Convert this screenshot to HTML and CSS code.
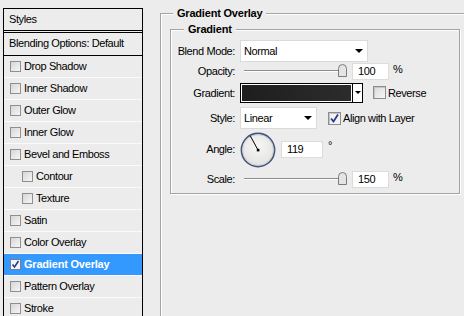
FILE: index.html
```html
<!DOCTYPE html>
<html>
<head>
<meta charset="utf-8">
<link rel="stylesheet" href="styles.css">
</head>
<body>
<div class="app">
  <aside class="styles">
    <div class="head">Styles</div>
    <div class="blend">Blending Options: Default</div>
    <ul class="fx">
      <li><span class="cb"></span>Drop Shadow</li>
      <li><span class="cb"></span>Inner Shadow</li>
      <li><span class="cb"></span>Outer Glow</li>
      <li><span class="cb"></span>Inner Glow</li>
      <li><span class="cb"></span>Bevel and Emboss</li>
      <li class="sub"><span class="cb"></span>Contour</li>
      <li class="sub"><span class="cb"></span>Texture</li>
      <li><span class="cb"></span>Satin</li>
      <li><span class="cb"></span>Color Overlay</li>
      <li class="on"><span class="cb checked"><svg width="9" height="9" viewBox="0 0 9 9"><path d="M1.5 4.5 L3.5 7 L7.5 1" fill="none" stroke="#2a3a8c" stroke-width="1.6"/></svg></span>Gradient Overlay</li>
      <li><span class="cb"></span>Pattern Overlay</li>
      <li><span class="cb"></span>Stroke</li>
    </ul>
  </aside>
  <main class="panel">
    <fieldset class="outer">
      <legend>Gradient Overlay</legend>
      <fieldset class="inner">
        <legend>Gradient</legend>
        <div class="row r-blend">
          <span class="lbl">Blend Mode:</span>
          <div class="select s-blend"><span>Normal</span><i class="arrow"></i></div>
        </div>
        <div class="row r-slider">
          <span class="lbl">Opacity:</span>
          <div class="slider"><span class="thumb"><svg width="9" height="13" viewBox="0 0 9 13"><path d="M0.5 12.5 V4.5 Q0.5 0.5 4.5 0.5 Q8.5 0.5 8.5 4.5 V12.5 Z" fill="#e4e4e4" stroke="#7b7b7b"/></svg></span></div>
          <div class="num">100</div>
          <span class="unit">%</span>
        </div>
        <div class="row r-grad">
          <span class="lbl">Gradient:</span>
          <div class="gradbox"><div class="swatch"></div><div class="gdrop"><i class="arrow"></i></div></div>
          <span class="chk c-rev"></span><span class="ctext">Reverse</span>
        </div>
        <div class="row r-style">
          <span class="lbl">Style:</span>
          <div class="select s-style"><span>Linear</span><i class="arrow"></i></div>
          <span class="chk c-align"><svg width="11" height="11" viewBox="0 0 11 11"><path d="M2 5.5 L4.5 8.5 L9 1.5" fill="none" stroke="#26388a" stroke-width="1.8"/></svg></span><span class="ctext">Align with Layer</span>
        </div>
        <div class="row r-angle">
          <span class="lbl">Angle:</span>
          <svg class="dial" width="36" height="36" viewBox="0 0 36 36">
            <defs><radialGradient id="dg" cx="50%" cy="40%" r="60%"><stop offset="0" stop-color="#f7f7f5"/><stop offset="1" stop-color="#e2e2e0"/></radialGradient></defs>
            <circle cx="18" cy="18" r="16.6" fill="url(#dg)" stroke="#46557a" stroke-width="1.6"/>
            <circle cx="18" cy="18" r="15.3" fill="none" stroke="#c9ccd6" stroke-width="0.8"/>
            <line x1="18" y1="18" x2="10.3" y2="3.9" stroke="#000" stroke-width="1"/>
            <rect x="16.8" y="16.8" width="2.6" height="2.6" fill="#000"/>
          </svg>
          <div class="num n-angle">119</div>
          <span class="deg">°</span>
        </div>
        <div class="row r-slider r-scale">
          <span class="lbl">Scale:</span>
          <div class="slider"><span class="thumb"><svg width="9" height="13" viewBox="0 0 9 13"><path d="M0.5 12.5 V4.5 Q0.5 0.5 4.5 0.5 Q8.5 0.5 8.5 4.5 V12.5 Z" fill="#e4e4e4" stroke="#7b7b7b"/></svg></span></div>
          <div class="num">150</div>
          <span class="unit">%</span>
        </div>
      </fieldset>
    </fieldset>
  </main>
</div>
</body>
</html>
```
FILE: styles.css
```css
* { box-sizing: border-box; }
html, body { margin: 0; padding: 0; }
body {
  width: 464px;
  height: 316px;
  overflow: hidden;
  background: #ececec;
  font-family: "Liberation Sans", Arial, sans-serif;
  font-size: 11px;
  letter-spacing: -0.4px;
  color: #000;
}
.app { display: flex; height: 316px; }

/* sidebar */
.styles {
  margin: 8px 0 0 3px;
  width: 140px;
  height: 308px;
  border: 1px solid #000;
  border-bottom: none;
  flex: none;
  overflow: hidden;
}
.head {
  height: 24px;
  line-height: 20px;
  padding-left: 5px;
  border-bottom: 3px double #000;
}
.blend {
  height: 23px;
  line-height: 21px;
  padding-left: 5px;
  border-bottom: 1px solid #000;
}
.fx { list-style: none; margin: 0; padding: 0; }
.fx li {
  height: 22px;
  border-bottom: 1px solid #fbfbfb;
  display: flex;
  align-items: center;
  padding-left: 6px;
  padding-bottom: 1px;
}
.fx li.sub { padding-left: 18px; }
.fx li.on { background: #3399ff; color: #fff; font-weight: bold; letter-spacing: -0.2px; }
.cb {
  width: 11px;
  height: 11px;
  border: 1px solid #8f8f8f;
  background: linear-gradient(135deg, #d6d6d6, #f6f6f6);
  margin-right: 3px;
  flex: none;
  display: flex;
  align-items: center;
  justify-content: center;
}
.cb.checked { background: #f4f4f8; border-color: #7a7f8f; }

/* panel */
.panel { margin-left: 17px; flex: none; }
fieldset {
  margin: 0;
  border: 1px solid #a3a3a3;
  box-shadow: 1px 1px 0 #fff, inset 1px 1px 0 #fff;
  min-width: 0;
}
legend {
  font-weight: bold;
  letter-spacing: -0.2px;
  line-height: 14px;
  padding: 0 4px;
  background: #ececec;
}
.outer {
  margin-top: 6px;
  width: 304px;
  height: 310px;
  padding: 0 0 0 9px;
  border-right: none;
  border-bottom: none;
  box-shadow: inset 1px 1px 0 #fff;
}
.outer > legend { margin-left: 3px; }
.inner {
  width: 290px;
  margin-top: 2px;
  padding: 4px 0 5px 0;
}
.inner > legend { margin-left: 13px; }

.row { display: flex; align-items: center; }
.lbl { width: 65px; text-align: right; padding-right: 1px; margin-right: 4px; flex: none; }
.r-blend { height: 22px; }
.r-slider { height: 18px; }
.r-grad { height: 21px; margin-top: 2px; }
.r-style { height: 22px; margin-top: 4px; }
.r-angle { height: 38px; margin-top: 1px; }
.r-scale { margin-top: 2px; }

.select {
  height: 22px;
  background: #fff;
  border: 1px solid #dadada;
  display: flex;
  align-items: center;
  justify-content: space-between;
  padding: 0 4px 0 3px;
}
.s-blend { width: 128px; }
.s-style { width: 77px; }
.arrow {
  width: 0; height: 0;
  border-left: 4px solid transparent;
  border-right: 4px solid transparent;
  border-top: 4px solid #000;
}
.slider { position: relative; width: 107px; height: 18px; flex: none; }
.slider::before {
  content: "";
  position: absolute;
  left: 4px;
  width: 98px;
  top: 8px;
  border-top: 1px solid #8c8c8c;
  border-bottom: 1px solid #fff;
}
.thumb { position: absolute; left: 98px; top: 2px; height: 13px; display: block; }
.thumb svg { display: block; }
.num {
  margin-left: 5px;
  width: 37px;
  height: 17px;
  background: #fff;
  border: 1px solid #dcdcdc;
  line-height: 15px;
  padding-left: 5px;
}
.unit { margin-left: 4px; margin-top: -4px; }

.gradbox {
  width: 123px;
  height: 20px;
  border: 1px solid #000;
  display: flex;
  background: #fff;
}
.swatch {
  flex: 1;
  border: 1px solid #fff;
  background: linear-gradient(to right, #1e1e1e, #2c2c2c);
}
.gdrop {
  width: 10px;
  border-left: 1px solid #000;
  display: flex;
  align-items: center;
  justify-content: center;
}
.gdrop .arrow { border-left-width: 3px; border-right-width: 3px; border-top-width: 3px; }
.chk {
  width: 13px;
  height: 13px;
  border: 1px solid #8d8d8d;
  background: linear-gradient(135deg, #d9d9d9, #f7f7f7);
  box-shadow: inset 1px 1px 0 #c4c4c4;
  margin-right: 2px;
  flex: none;
  display: flex;
  align-items: center;
  justify-content: center;
}
.c-rev { margin-left: 10px; }
.c-align { margin-left: 11px; background: #f3f3f6; }
.dial { display: block; margin-top: 1px; flex: none; }
.n-angle { width: 42px; }
.deg { margin-left: 5px; margin-top: -9px; }
```
